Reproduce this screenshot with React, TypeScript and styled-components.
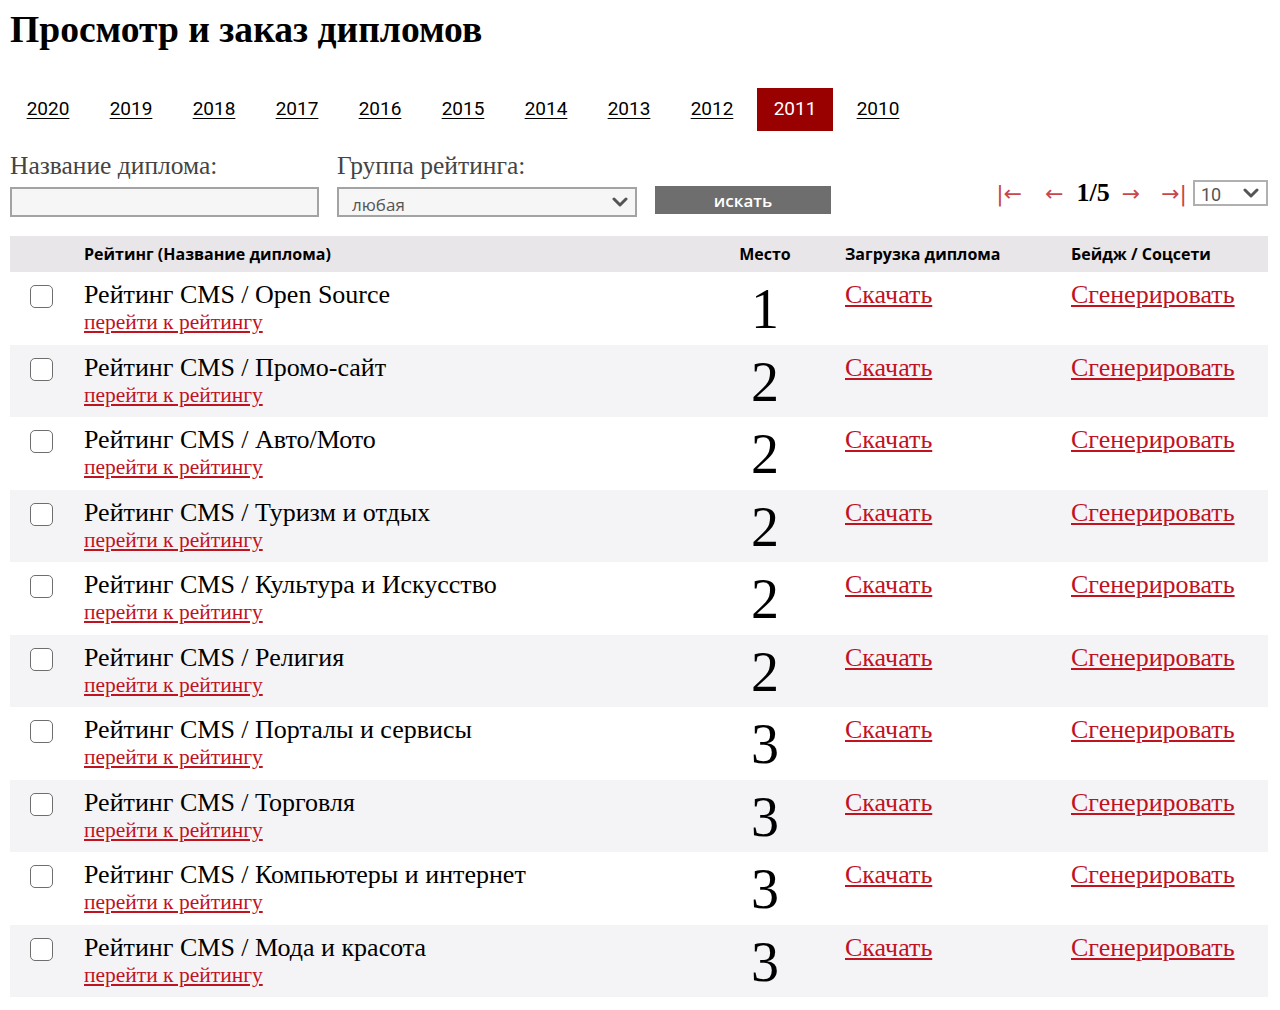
import styled, { createGlobalStyle } from "styled-components";

const years = ["2020", "2019", "2018", "2017", "2016", "2015", "2014", "2013", "2012", "2011", "2010"];

const diplomas = [
  { name: "Рейтинг CMS / Open Source", place: 1 },
  { name: "Рейтинг CMS / Промо-сайт", place: 2 },
  { name: "Рейтинг CMS / Авто/Мото", place: 2 },
  { name: "Рейтинг CMS / Туризм и отдых", place: 2 },
  { name: "Рейтинг CMS / Культура и Искусство", place: 2 },
  { name: "Рейтинг CMS / Религия", place: 2 },
  { name: "Рейтинг CMS / Порталы и сервисы", place: 3 },
  { name: "Рейтинг CMS / Торговля", place: 3 },
  { name: "Рейтинг CMS / Компьютеры и интернет", place: 3 },
  { name: "Рейтинг CMS / Мода и красота", place: 3 },
];

const Chevron = () => (
  <svg width="16" height="10" viewBox="0 0 16 10">
    <path d="M2 2 L8 8 L14 2" fill="none" stroke="#555" strokeWidth="3" strokeLinecap="round" strokeLinejoin="round" />
  </svg>
);

const App = () => {
  const activeYear = "2011";

  return (
    <>
      <GlobalStyle />
      <Style.Page>
        <Style.Title>Просмотр и заказ дипломов</Style.Title>

        <Style.Years>
          {years.map((y) => (
            <Style.YearTab key={y} active={y === activeYear}>
              {y}
            </Style.YearTab>
          ))}
        </Style.Years>

        <Style.Filters>
          <Style.Field width={309}>
            <Style.Label>Название диплома:</Style.Label>
            <Style.Input type="text" />
          </Style.Field>
          <Style.Field width={300}>
            <Style.Label>Группа рейтинга:</Style.Label>
            <Style.SelectWrap>
              <Style.Select defaultValue="any">
                <option value="any">любая</option>
              </Style.Select>
              <Style.SelectArrow>
                <Chevron />
              </Style.SelectArrow>
            </Style.SelectWrap>
          </Style.Field>
          <Style.SearchButton>искать</Style.SearchButton>

          <Style.Pager>
            <Style.Arrow space={0}>|←</Style.Arrow>
            <Style.Arrow space={23}>←</Style.Arrow>
            <Style.PageNum>1/5</Style.PageNum>
            <Style.Arrow space={12}>→</Style.Arrow>
            <Style.Arrow space={21}>→|</Style.Arrow>
            <Style.PerPageWrap>
              <Style.PerPage defaultValue="10">
                <option value="10">10</option>
              </Style.PerPage>
              <Style.SelectArrow>
                <Chevron />
              </Style.SelectArrow>
            </Style.PerPageWrap>
          </Style.Pager>
        </Style.Filters>

        <Style.Table>
          <Style.HeadRow>
            <Style.HeadCell />
            <Style.HeadCell>Рейтинг (Название диплома)</Style.HeadCell>
            <Style.HeadCell center>Место</Style.HeadCell>
            <Style.HeadCell padded>Загрузка диплома</Style.HeadCell>
            <Style.HeadCell padded>Бейдж / Соцсети</Style.HeadCell>
          </Style.HeadRow>
          {diplomas.map((d, i) => (
            <Style.Row key={d.name} striped={i % 2 === 1}>
              <Style.CheckCell>
                <Style.Checkbox type="checkbox" />
              </Style.CheckCell>
              <Style.NameCell>
                <Style.Name>{d.name}</Style.Name>
                <Style.SmallLink href="#">перейти к рейтингу</Style.SmallLink>
              </Style.NameCell>
              <Style.Place>{d.place}</Style.Place>
              <Style.LinkCell>
                <Style.BigLink href="#">Скачать</Style.BigLink>
              </Style.LinkCell>
              <Style.LinkCell>
                <Style.BigLink href="#">Сгенерировать</Style.BigLink>
              </Style.LinkCell>
            </Style.Row>
          ))}
        </Style.Table>
      </Style.Page>
    </>
  );
};

export default App;

const GlobalStyle = createGlobalStyle`
  body {
    margin: 0;
    background: #fff;
    font-family: "Liberation Serif", "Times New Roman", serif;
  }
`;

const Style = {
  Page: styled.div`
    padding: 0 12px 0 10px;
  `,
  Title: styled.h1`
    margin: 0;
    padding-top: 10px;
    font-family: "Liberation Serif", serif;
    font-size: 37.6px;
    line-height: 40px;
    font-weight: 700;
    color: #000;
  `,
  Years: styled.div`
    display: flex;
    gap: 7px;
    margin-top: 38px;
  `,
  YearTab: styled.a<{ active: boolean }>`
    box-sizing: border-box;
    display: flex;
    align-items: center;
    justify-content: center;
    width: 76px;
    height: 43px;
    padding-bottom: 3px;
    font-family: Roboto, "Open Sans", sans-serif;
    font-size: 19px;
    color: ${(p) => (p.active ? "#fff" : "#000")};
    background: ${(p) => (p.active ? "#990000" : "transparent")};
    text-decoration: ${(p) => (p.active ? "none" : "underline")};
    text-underline-offset: 3px;
    cursor: pointer;
  `,
  Filters: styled.div`
    display: flex;
    align-items: flex-end;
    gap: 18px;
    margin-top: 20px;
  `,
  Field: styled.div<{ width: number }>`
    display: flex;
    flex-direction: column;
    width: ${(p) => p.width}px;
  `,
  Label: styled.label`
    font-family: "Liberation Serif", serif;
    font-size: 25.5px;
    line-height: 30px;
    color: #444;
    margin-bottom: 6px;
    white-space: nowrap;
  `,
  Input: styled.input`
    box-sizing: border-box;
    width: 100%;
    height: 30px;
    border: 2px solid #a3a3a3;
    background: #f6f6f6;
    outline: none;
  `,
  SelectWrap: styled.div`
    position: relative;
    width: 100%;
    height: 30px;
  `,
  Select: styled.select`
    box-sizing: border-box;
    width: 100%;
    height: 30px;
    appearance: none;
    border: 2px solid #a3a3a3;
    background: #f6f6f6;
    padding: 4px 0 0 13px;
    font-family: "Open Sans", sans-serif;
    font-size: 17px;
    color: #555;
    outline: none;
  `,
  SelectArrow: styled.span`
    position: absolute;
    right: 9px;
    top: 50%;
    transform: translateY(-50%);
    display: flex;
    pointer-events: none;
  `,
  SearchButton: styled.button`
    width: 176px;
    height: 28px;
    margin-bottom: 3px;
    border: none;
    background: #6e6e6e;
    color: #fff;
    font-family: "Open Sans", sans-serif;
    font-size: 17px;
    font-weight: 600;
    padding: 0;
    cursor: pointer;
  `,
  Pager: styled.div`
    display: flex;
    align-items: center;
    margin-left: auto;
    margin-bottom: 9px;
  `,
  Arrow: styled.span<{ space: number }>`
    margin-left: ${(p) => p.space}px;
    font-family: "DejaVu Sans", sans-serif;
    font-size: 22px;
    color: #c8474b;
    cursor: pointer;
  `,
  PageNum: styled.span`
    margin-left: 13px;
    font-family: "Liberation Serif", serif;
    font-size: 26px;
    font-weight: 700;
    color: #000;
  `,
  PerPageWrap: styled.div`
    position: relative;
    width: 75px;
    height: 26px;
    margin-left: 6px;
  `,
  PerPage: styled.select`
    box-sizing: border-box;
    width: 100%;
    height: 26px;
    appearance: none;
    border: 2px solid #b0b0b0;
    background: #fff;
    padding: 2px 0 0 6px;
    font-family: Roboto, sans-serif;
    font-size: 18px;
    color: #555;
    outline: none;
  `,
  Table: styled.div`
    margin-top: 19px;
  `,
  HeadRow: styled.div`
    display: grid;
    grid-template-columns: 74px 631px 100px 226px 1fr;
    height: 36px;
    background: #e9e6e9;
    align-items: center;
  `,
  HeadCell: styled.div<{ center?: boolean; padded?: boolean }>`
    font-family: "Open Sans", sans-serif;
    font-size: 16px;
    font-weight: 700;
    color: #000;
    text-align: ${(p) => (p.center ? "center" : "left")};
    padding-left: ${(p) => (p.padded ? "30px" : "0")};
  `,
  Row: styled.div<{ striped: boolean }>`
    display: grid;
    grid-template-columns: 74px 631px 100px 226px 1fr;
    height: 72.5px;
    background: ${(p) => (p.striped ? "#f4f4f6" : "#fff")};
    align-items: start;
  `,
  CheckCell: styled.div`
    padding: 13px 0 0 20px;
  `,
  Checkbox: styled.input`
    appearance: none;
    box-sizing: border-box;
    width: 23px;
    height: 23px;
    margin: 0;
    border: 1.5px solid #6e6e6e;
    border-radius: 5px;
    background: #fff;
    cursor: pointer;
  `,
  NameCell: styled.div`
    display: flex;
    flex-direction: column;
    align-items: flex-start;
    padding-top: 9px;
  `,
  Name: styled.div`
    font-family: "Liberation Serif", serif;
    font-size: 26px;
    line-height: 28px;
    color: #000;
  `,
  SmallLink: styled.a`
    font-family: "Liberation Serif", serif;
    font-size: 21.5px;
    line-height: 26px;
    color: #c1121f;
    text-decoration: underline;
  `,
  Place: styled.div`
    padding-top: 9px;
    text-align: center;
    font-family: "Liberation Serif", serif;
    font-size: 56px;
    line-height: 56px;
    color: #000;
  `,
  LinkCell: styled.div`
    padding: 9px 0 0 30px;
  `,
  BigLink: styled.a`
    font-family: "Liberation Serif", serif;
    font-size: 26px;
    line-height: 28px;
    color: #c1121f;
    text-decoration: underline;
  `,
};
